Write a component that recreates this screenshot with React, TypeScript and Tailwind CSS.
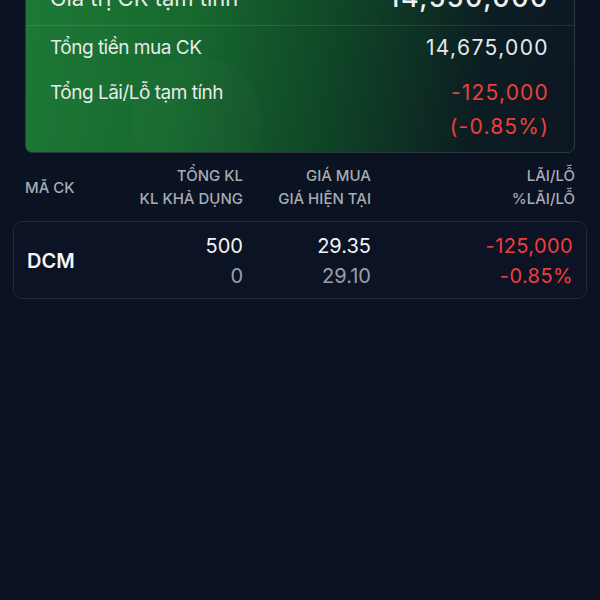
import React from "react";

interface Holding {
  symbol: string;
  totalQty: string;
  availQty: string;
  buyPrice: string;
  curPrice: string;
  pnl: string;
  pnlPct: string;
}

const holdings: Holding[] = [
  {
    symbol: "DCM",
    totalQty: "500",
    availQty: "0",
    buyPrice: "29.35",
    curPrice: "29.10",
    pnl: "-125,000",
    pnlPct: "-0.85%",
  },
];

const SummaryCard = () => {
  return (
    <div className="relative mx-[25px] mt-[-50px] overflow-hidden rounded-[7px] border border-[#2a3b3a] bg-[linear-gradient(100deg,#1d7a37_0%,#17692f_30%,#0f4326_58%,#0c1d22_82%,#0c1622_100%)]">
      <div className="pointer-events-none absolute left-[105px] top-[105px] h-[130px] w-[130px] rounded-full bg-white/[0.015]" />
      <div className="relative flex h-[75px] items-center justify-between border-b border-white/10 pl-[24px] pr-[25px] pt-[20px]">
        <span className="text-[22px] text-[#e8ebe9]">Giá trị CK tạm tính</span>
        <span className="text-[27px] font-medium tracking-[1.5px] text-[#eef0f2]">14,550,000</span>
      </div>
      <div className="relative flex h-[44px] items-center justify-between pl-[24px] pr-[25px]">
        <span className="text-[19px] tracking-[-0.5px] text-[#e8ebe9]">Tổng tiền mua CK</span>
        <span className="text-[21px] tracking-[1.4px] text-[#e6e8ec]">14,675,000</span>
      </div>
      <div className="relative flex justify-between pb-[8px] pl-[24px] pr-[25px] pt-[6px]">
        <span className="text-[19px] leading-[34px] tracking-[-0.5px] text-[#e8ebe9]">Tổng Lãi/Lỗ tạm tính</span>
        <div className="flex flex-col items-end text-[21px] leading-[34px] tracking-[1.2px] text-[#ec3f3c]">
          <span>-125,000</span>
          <span>(-0.85%)</span>
        </div>
      </div>
    </div>
  );
};

const App = () => {
  return (
    <div className="h-[600px] w-[600px] overflow-hidden bg-[#0b1221] font-['Inter',sans-serif]">
      <SummaryCard />

      <div className="mt-[11px] grid grid-cols-[111px_107px_128px_1fr] px-[25px] text-[15px] font-medium uppercase leading-[23px] text-[#a7acb5]">
        <div className="flex items-center">Mã CK</div>
        <div className="text-right">
          <div>Tổng KL</div>
          <div>KL khả dụng</div>
        </div>
        <div className="text-right">
          <div>Giá mua</div>
          <div>Giá hiện tại</div>
        </div>
        <div className="text-right">
          <div>Lãi/Lỗ</div>
          <div>%Lãi/Lỗ</div>
        </div>
      </div>

      <div className="mt-[11px] px-[13px]">
        {holdings.map((h) => (
          <div
            key={h.symbol}
            className="grid grid-cols-[109px_107px_128px_1fr] rounded-[10px] border border-[#222a3a] bg-[#0c1324] px-[13px] pb-[7px] pt-[9px] text-[20px] leading-[30px]"
          >
            <div className="flex items-center font-semibold text-[#f5f6f8]">{h.symbol}</div>
            <div className="text-right">
              <div className="text-[#f2f3f5]">{h.totalQty}</div>
              <div className="text-[#9aa0aa]">{h.availQty}</div>
            </div>
            <div className="text-right">
              <div className="text-[#f2f3f5]">{h.buyPrice}</div>
              <div className="text-[#9aa0aa]">{h.curPrice}</div>
            </div>
            <div className="text-right tracking-[0.4px] text-[#ec3f3c]">
              <div>{h.pnl}</div>
              <div>{h.pnlPct}</div>
            </div>
          </div>
        ))}
      </div>
    </div>
  );
};

export default App;
